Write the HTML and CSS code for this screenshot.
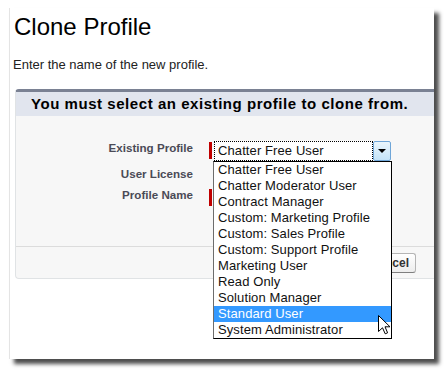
FILE: index.html
```html
<!DOCTYPE html>
<html lang="en">
<head>
    <meta charset="UTF-8">
    <title>Clone Profile</title>
    <link rel="stylesheet" href="styles.css">
</head>
<body>
    <div class="card">
        <h1 class="title">Clone Profile</h1>
        <p class="intro">Enter the name of the new profile.</p>

        <div class="panel">
            <div class="panel-head">You must select an existing profile to clone from.</div>
            <div class="panel-body">
                <div class="row row-first">
                    <label class="label">Existing Profile</label>
                    <span class="req"></span>
                    <div class="field">
                        <div class="select">
                            <span class="select-text">Chatter Free User</span>
                            <span class="select-btn"><span class="arrow"></span></span>
                        </div>
                        <ul class="options">
                            <li>Chatter Free User</li>
                            <li>Chatter Moderator User</li>
                            <li>Contract Manager</li>
                            <li>Custom: Marketing Profile</li>
                            <li>Custom: Sales Profile</li>
                            <li>Custom: Support Profile</li>
                            <li>Marketing User</li>
                            <li>Read Only</li>
                            <li>Solution Manager</li>
                            <li class="hover">Standard User</li>
                            <li>System Administrator</li>
                        </ul>
                        <svg class="cursor" width="14" height="20" viewBox="0 0 14 20">
                            <path d="M0.5 0.5 L0.5 16.5 L4.5 12.8 L7.2 18.8 L9.6 17.8 L7 11.8 L12 11.8 Z" fill="#fff" stroke="#000" stroke-width="1" stroke-linejoin="round"/>
                        </svg>
                    </div>
                </div>
                <div class="row row-small">
                    <label class="label">User License</label>
                    <span class="req none"></span>
                    <div class="field"></div>
                </div>
                <div class="row">
                    <label class="label">Profile Name</label>
                    <span class="req"></span>
                    <div class="field"><input class="text-input" type="text"></div>
                </div>
            </div>
            <div class="buttons">
                <button class="btn">Save</button>
                <button class="btn">Cancel</button>
            </div>
        </div>
    </div>
</body>
</html>
```

FILE: styles.css
```css
html {
    background-color: white;
}
body {
    margin: 0;
    padding: 8px 0 0 9px;
    font-family: "Liberation Sans", Arial, sans-serif;
}
.card {
    width: 425px;
    height: 351px;
    box-sizing: border-box;
    padding: 5px 0 0 4px;
    margin-bottom: 11px;
    background-color: white;
    border-left: 1px solid #e4e4e4;
    box-shadow: 5px 5px 4px rgba(0, 0, 0, 0.7);
}
.title {
    margin: 0;
    font-size: 24px;
    line-height: 28px;
    font-weight: normal;
    color: black;
}
.intro {
    margin: 16px 0 16px -1px;
    font-size: 13px;
    line-height: 16px;
    color: #222;
}

.panel {
    margin-left: 1px;
    border-top: 3px solid #7a8193;
    border-left: 1px solid #e0e3e5;
    border-bottom: 1px solid #e0e3e5;
    border-radius: 4px 0 0 4px;
    background-color: #f7f7f7;
}
.panel-head {
    height: 24px;
    line-height: 24px;
    padding-left: 15px;
    background-color: #e1e5ee;
    font-size: 15px;
    letter-spacing: 0.55px;
    font-weight: bold;
    color: black;
    white-space: nowrap;
    overflow: hidden;
}
.panel-body {
    padding-top: 25px;
    height: 105px;
}
.row {
    display: flex;
    align-items: flex-start;
    height: 20px;
    margin-bottom: 6px;
}
.row-small {
    height: 15px;
}
.label {
    width: 177px;
    margin-right: 16px;
    text-align: right;
    font-size: 11.6px;
    line-height: 14px;
    font-weight: bold;
    color: #4a4a56;
}
.req {
    width: 3px;
    height: 17px;
    margin-top: 1px;
    margin-right: 2px;
    background-color: #c00000;
}
.req.none {
    background-color: transparent;
}
.field {
    position: relative;
}
.text-input {
    width: 150px;
    height: 18px;
    margin: 0;
    border: 1px solid #a5acb2;
}

.select {
    display: flex;
    width: 177px;
    height: 20px;
    box-sizing: border-box;
    background-color: white;
}
.select-text {
    flex: 1;
    border: 1px dotted #000;
    padding-left: 3px;
    font-size: 13px;
    line-height: 18px;
    letter-spacing: 0.1px;
    color: #111;
}
.select-btn {
    display: flex;
    align-items: center;
    justify-content: center;
    width: 16px;
    border: 1px solid #6fa6d8;
    border-radius: 2px;
    background: linear-gradient(#eaf6fd, #c4e3f8);
}
.arrow {
    width: 0;
    height: 0;
    border-left: 4px solid transparent;
    border-right: 4px solid transparent;
    border-top: 4px solid #000;
}
.options {
    position: absolute;
    top: 20px;
    left: -1px;
    z-index: 5;
    width: 179px;
    box-sizing: border-box;
    margin: 0;
    padding: 0;
    list-style: none;
    background-color: white;
    border: 1px solid #000;
    border-left-color: #6d6d6d;
}
.options li {
    height: 16px;
    padding-left: 4px;
    font-size: 13px;
    line-height: 16px;
    letter-spacing: 0.1px;
    color: #111;
    white-space: nowrap;
}
.options li.hover {
    background-color: #3399ff;
    color: white;
}
.cursor {
    position: absolute;
    left: 164px;
    top: 174px;
    z-index: 6;
}

.buttons {
    display: flex;
    justify-content: flex-end;
    gap: 4px;
    padding: 6px 18px 5px 0;
    border-top: 1px solid #dcdcdc;
}
.btn {
    margin: 0;
    padding: 2px 6px;
    height: 20px;
    border: 1px solid #b5b5b5;
    border-bottom-color: #7f7f7f;
    border-radius: 3px;
    background: linear-gradient(#ffffff, #ededed);
    font-family: "Liberation Sans", Arial, sans-serif;
    font-size: 12px;
    line-height: 14px;
    font-weight: bold;
    color: #333;
}
```
